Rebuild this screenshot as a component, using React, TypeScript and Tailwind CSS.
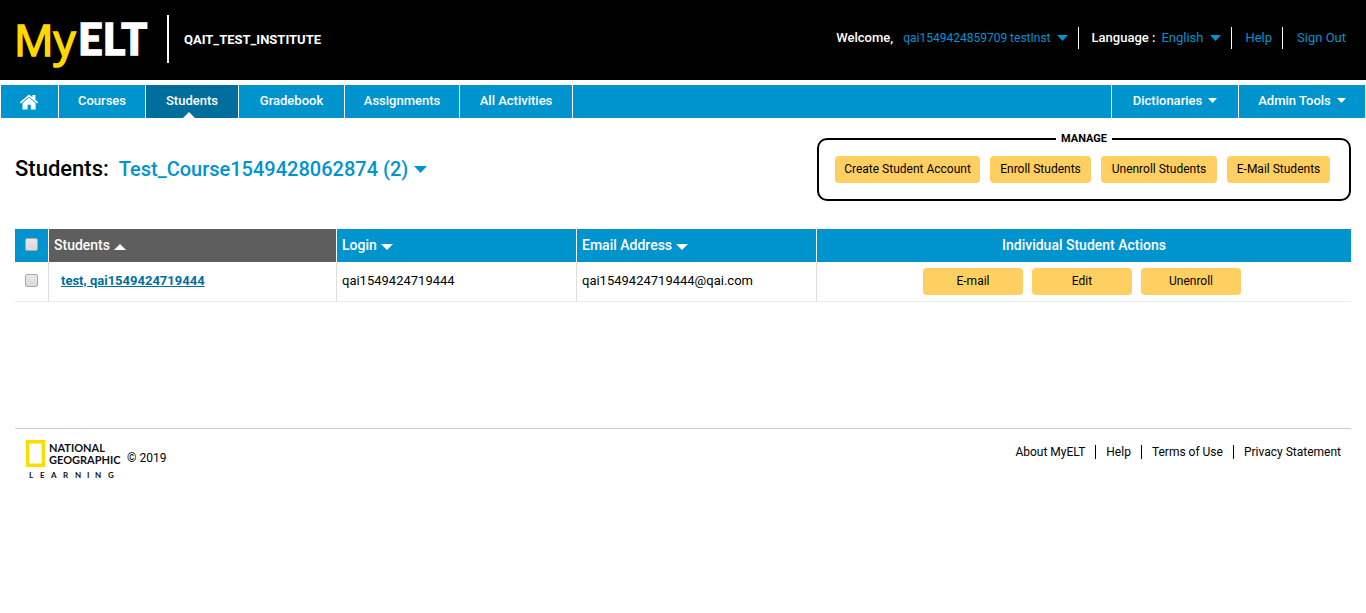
import React from "react";

type CaretProps = { className?: string; up?: boolean };

function Caret({ className = "w-[9px] h-[5px]", up = false }: CaretProps) {
  return (
    <svg viewBox="0 0 12 6" preserveAspectRatio="none" fill="currentColor" className={className} aria-hidden="true">
      {up ? <path d="M6 0 12 6H0z" /> : <path d="M0 0h12L6 6z" />}
    </svg>
  );
}

function HomeIcon() {
  return (
    <svg viewBox="0 0 20 16" className="h-4 w-5" fill="currentColor" aria-hidden="true">
      <path d="M10 .4 13.4 3.2V1h3v4.7l2.8 2.6-1 1.2L10 2.7 1.8 9.5l-1-1.2z" />
      <path d="M10 3.6 16.6 9.2V15.4H11.8V10.8H8.6V15.4H3.5V9.2z" />
    </svg>
  );
}

function Checkbox({ label }: { label: string }) {
  return (
    <input
      type="checkbox"
      aria-label={label}
      className="block size-[13px] appearance-none rounded-[2px] border border-[#a9a9a9] bg-linear-to-b from-[#e8e8e8] to-[#d9d9d9] checked:bg-[#0094cf]"
    />
  );
}

function YellowButton({ children, className }: { children: React.ReactNode; className: string }) {
  return (
    <button type="button" className={`h-[27px] rounded-[4px] bg-[#ffcf61] pb-0.5 text-center text-[12px] whitespace-nowrap text-black ${className}`}>
      {children}
    </button>
  );
}

const tabs = [
  { label: "Courses", width: "w-[87px]" },
  { label: "Students", width: "w-[93px]", active: true },
  { label: "Gradebook", width: "w-[106px]" },
  { label: "Assignments", width: "w-[115px]" },
  { label: "All Activities", width: "w-[113px]" },
];

const menus = [
  { label: "Dictionaries", width: "w-[127px]" },
  { label: "Admin Tools", width: "w-[127px]" },
];

const manageActions = [
  { label: "Create Student Account", width: "w-[145px]" },
  { label: "Enroll Students", width: "w-[101px]" },
  { label: "Unenroll Students", width: "w-[116px]" },
  { label: "E-Mail Students", width: "w-[103px]" },
];

const footerLinks = ["About MyELT", "Help", "Terms of Use", "Privacy Statement"];

function Header() {
  return (
    <header className="flex h-20 items-center justify-between bg-black pr-5 pl-3 text-[13px] text-white">
      <div className="flex items-center">
        <a href="#home" aria-label="MyELT" className="block h-20 w-[136px]">
          <svg viewBox="0 0 136 80" className="h-20 w-[136px]" aria-hidden="true">
            <text x="2" y="56" fill="#ffd800" stroke="#ffd800" strokeWidth="1.6" fontFamily="Open Sans" fontSize="44" fontWeight="400">My</text>
            <text x="66" y="55" fill="#fff" stroke="#fff" strokeWidth="1.4" fontFamily="Lato" fontSize="43" fontWeight="900">ELT</text>
          </svg>
        </a>
        <div className="mb-0.5 ml-[19px] h-12 w-0.5 bg-white" />
        <p className="ml-[15px] text-[13px] font-bold">QAIT_TEST_INSTITUTE</p>
      </div>
      <div className="flex items-center pb-1">
        <span className="font-medium">Welcome,</span>
        <button type="button" className="ml-2.5 flex items-center gap-1.5 pr-2.5 text-[12px] text-[#0094cf]">
          qai1549424859709 testInst
          <Caret className="h-1.5 w-[11px]" />
        </button>
        <div className="flex h-[22px] items-center border-l border-white pr-2.5 pl-[13px]">
          <label htmlFor="language" className="font-medium">Language :</label>
          <div className="ml-1.5 grid items-center">
            <select id="language" className="col-start-1 row-start-1 w-[60px] appearance-none bg-transparent text-[#0094cf]">
              <option>English</option>
            </select>
            <span className="pointer-events-none col-start-1 row-start-1 justify-self-end text-[#0094cf]">
              <Caret className="h-1.5 w-[11px]" />
            </span>
          </div>
        </div>
        <a href="#help" className="flex h-[22px] items-center border-l border-white pr-2.5 pl-[13px] text-[#0094cf]">Help</a>
        <a href="#signout" className="flex h-[22px] items-center border-l border-white pl-[14px] text-[#0094cf]">Sign Out</a>
      </div>
    </header>
  );
}

function NavBar() {
  return (
    <nav className="mx-px mt-[5px] flex h-[33px] bg-[#0094cf] text-[13px] font-medium text-white">
      <a href="#home" aria-label="Home" className="flex w-[58px] items-center justify-center border-r border-white pr-0.5">
        <HomeIcon />
      </a>
      {tabs.map((t) => (
        <a
          key={t.label}
          href={`#${t.label}`}
          className={`relative flex items-center justify-center border-r border-white pb-0.5 ${t.width} ${t.active ? "bg-[#006e9c]" : ""}`}
        >
          {t.label}
          {t.active && <Caret up className="absolute bottom-0 left-[37px] h-1.5 w-3" />}
        </a>
      ))}
      <div className="flex-1" />
      {menus.map((m) => (
        <button key={m.label} type="button" className={`flex items-center justify-center gap-1.5 border-l border-white pb-0.5 ${m.width}`}>
          {m.label}
          <Caret />
        </button>
      ))}
    </nav>
  );
}

function SortButton({ children, up }: { children: React.ReactNode; up?: boolean }) {
  return (
    <button type="button" className="flex items-center gap-1">
      {children}
      <Caret up={up} className="mt-0.5 h-1.5 w-3" />
    </button>
  );
}

function StudentsTable() {
  return (
    <table className="w-full table-fixed border-separate border-spacing-0 text-[14px]">
      <colgroup>
        <col className="w-[34px]" />
        <col className="w-[288px]" />
        <col className="w-[240px]" />
        <col className="w-[240px]" />
        <col />
      </colgroup>
      <thead>
        <tr className="h-[33px] bg-[#0094cf] text-left text-white">
          <th className="border-r border-white pb-[3px] pl-2.5">
            <Checkbox label="Select all students" />
          </th>
          <th className="border-r border-white bg-[#5e5e5e] pl-[5px] font-medium">
            <SortButton up>Students</SortButton>
          </th>
          <th className="border-r border-white pl-[5px] font-medium">
            <SortButton>Login</SortButton>
          </th>
          <th className="border-r border-white pl-[5px] font-medium">
            <SortButton>Email Address</SortButton>
          </th>
          <th className="text-center font-medium">Individual Student Actions</th>
        </tr>
      </thead>
      <tbody>
        <tr className="h-10 text-[13px] *:border-b *:border-b-[#ebebeb]">
          <td className="border-r border-r-[#dcdcdc] pb-0.5 pl-2.5">
            <Checkbox label="Select test, qai1549424719444" />
          </td>
          <td className="border-r border-r-[#dcdcdc] pb-0.5 pl-3">
            <a href="#student" className="font-bold text-[#006e9c] underline">test, qai1549424719444</a>
          </td>
          <td className="border-r border-r-[#dcdcdc] pb-0.5 pl-[5px]">qai1549424719444</td>
          <td className="border-r border-r-[#dcdcdc] pb-0.5 pl-[5px]">qai1549424719444@qai.com</td>
          <td>
            <div className="flex justify-center gap-[9px] pr-1">
              <YellowButton className="w-[100px]">E-mail</YellowButton>
              <YellowButton className="w-[100px]">Edit</YellowButton>
              <YellowButton className="w-[100px]">Unenroll</YellowButton>
            </div>
          </td>
        </tr>
      </tbody>
    </table>
  );
}

function Footer() {
  return (
    <footer className="mt-[126px] flex items-start justify-between border-t border-[#ccc] pr-2.5 pl-2.5 text-[12px] text-black">
      <div className="flex items-start">
        <svg viewBox="0 0 98 56" className="h-14 w-[98px]" role="img" aria-label="National Geographic Learning">
          <path d="M2.7 12.7h15.6v23.6H2.7z" fill="none" stroke="#ffdc00" strokeWidth="3.4" />
          <g fontFamily="Lato" fontWeight="700" fill="#111">
            <text x="24" y="23" fontSize="11">NATIONAL</text>
            <text x="24" y="35" fontSize="11">GEOGRAPHIC</text>
            <text x="4 15 26 38 50 62 70 83" y="49" fontSize="8">LEARNING</text>
          </g>
        </svg>
        <span className="ml-1 pt-5">© 2019</span>
      </div>
      <ul className="flex pt-4">
        {footerLinks.map((link, i) => (
          <li key={link} className={i > 0 ? "flex h-[14px] items-center border-l border-black pl-2.5 ml-2.5" : "flex h-[14px] items-center"}>
            <a href={`#${link}`}>{link}</a>
          </li>
        ))}
      </ul>
    </footer>
  );
}

export default function App() {
  return (
    <div className="min-h-screen bg-white font-['Roboto',sans-serif] text-black">
      <Header />
      <NavBar />
      <main className="px-[15px] pt-3.5">
        <div className="flex items-start justify-between">
          <h1 className="flex items-baseline pt-[22px] text-[22px] leading-[30px] font-medium">
            Students:
            <button type="button" className="ml-2.5 flex items-center gap-1.5 text-[20px] text-[#0094cf]">
              Test_Course1549428062874 (2)
              <Caret className="h-[7px] w-[13px]" />
            </button>
          </h1>
          <fieldset className="h-[69px] w-[534px] rounded-[10px] border-2 border-black">
            <legend className="mx-auto px-[5px] text-[11px] leading-[13px] font-bold">MANAGE</legend>
            <div className="mt-[11px] flex gap-2.5 pl-4">
              {manageActions.map((a) => (
                <YellowButton key={a.label} className={a.width}>{a.label}</YellowButton>
              ))}
            </div>
          </fieldset>
        </div>
        <div className="mt-7">
          <StudentsTable />
        </div>
        <Footer />
      </main>
    </div>
  );
}
